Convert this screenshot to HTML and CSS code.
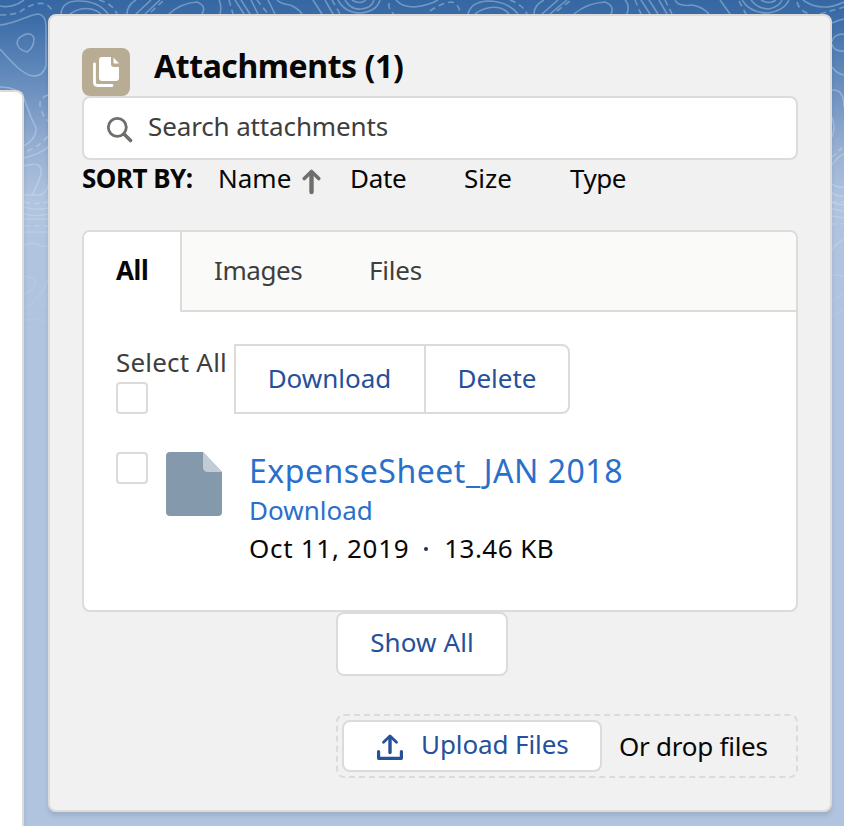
FILE: index.html
```html
<!DOCTYPE html>
<html lang="en">
<head>
<meta charset="utf-8">
<title>Attachments</title>
<link rel="stylesheet" href="styles.css">
</head>
<body>
<svg class="topography" width="844" height="400" viewBox="0 0 844 400" aria-hidden="true">
  <defs>
    <linearGradient id="fade" x1="0" y1="0" x2="0" y2="1">
      <stop offset="0" stop-color="#fff"/><stop offset=".5" stop-color="#fff"/><stop offset=".9" stop-color="#000"/>
    </linearGradient>
    <mask id="mask" maskUnits="userSpaceOnUse" x="0" y="0" width="844" height="400"><rect width="844" height="400" fill="url(#fade)"/></mask>
  </defs>
  <g mask="url(#mask)" fill="none" stroke="#d3e4f5" stroke-opacity=".38" stroke-width="1.6">
    <path d="M0 6C9 8 17 5 24 0M0 25C15 24 28 15 38 14Q46 15 46 26V65Q44 76 33 76C21 74 10 60 0 49"/>
    <path d="M22 36Q31 31 34 38Q34 48 27 52Q18 50 17 43Q18 38 22 36ZM0 87Q22 87 26 104Q30 116 36 128Q37 138 24 146M24 158Q40 154 48 147M24 166C35 163 42 163 41 174Q38 185 32 195H24M32 195H40Q47 192 48 185M24 207Q36 211 48 208M24 214Q36 217 48 214M24 219H48M24 232H48M24 245Q30 242 36 244Q42 247 48 246M24 276C36 277 36 283 35 285Q31 292 24 294M24 308Q39 301 48 280M24 320Q38 317 48 322M24 327Q40 327 48 339"/>
    <path stroke-dasharray="6 4" d="M0 15Q12 15 20 12C30 4 48 -3 53 13M48 95Q39 98 40 106Q42 115 48 121M27 151Q39 147 48 136M24 202Q36 205 48 202M24 226H48M24 315Q37 310 48 302"/>
    <path d="M61 14Q62 2 76 1Q98 0 108 14M70 14Q80 7 91 9Q98 11 101 14M127 14Q127 5 136 0M136 14L151 0M145 14L160 0M169 14Q181 3 197 2Q207 6 202 14M219 0Q222 6 220 14M235 0L244 14M241 0L250 14M251 0L258 14M268 0L275 14M277 0Q281 4 290 5Q298 8 302 14"/>
    <path stroke-dasharray="6 4" d="M99 0Q113 4 117 14M151 12L163 1M229 0L233 14M257 0L268 14M389 3Q388 10 394 14M430 11Q443 2 452 2Q460 5 460 14"/>
    <path d="M313 0L322 14M325 0L333 14M338 0Q345 13 361 13Q377 11 380 0M345 0Q351 10 361 9Q372 8 374 0M352 0Q360 5 366 0M396 0Q402 7 414 7Q430 5 438 0M468 14Q471 2 487 1Q508 1 518 14M475 14Q487 5 500 8Q506 10 509 14M534 14Q534 5 544 0M542 14L558 0M550 14L567 0M574 14Q587 3 605 2Q615 6 611 14M625 0Q630 5 627 14M641 0L650 14M649 0L658 14M659 0L667 14M675 0Q678 7 692 5Q703 7 709 14M720 0L730 14"/>
    <path stroke-dasharray="6 4" d="M332 0L340 14M510 0Q523 5 527 14M557 11L570 1M635 0L641 14M665 0L672 14M739 1L746 14M797 2Q799 11 810 14M820 14L844 7"/>
    <path d="M742 0Q750 13 768 13Q784 11 789 0M751 0Q758 9 769 9Q779 7 782 0M761 0Q769 5 776 0M803 0Q821 13 844 2M832 23Q839 20 844 19M832 42Q833 34 844 34M832 44Q834 52 844 51M832 67Q837 74 844 75M832 90Q844 89 844 107M832 117Q836 127 832 137M832 165Q838 156 844 154M832 184Q837 188 844 187M832 193Q838 197 844 196M832 203L844 205M832 209L844 211M832 216L844 218M832 250Q834 245 844 239M832 275L844 276M832 302Q836 297 844 294M832 317L844 309"/>
    <path stroke-dasharray="5 4" d="M832 157L844 146M832 202H844M832 224H844M832 322Q838 325 844 329"/>
  </g>
</svg>
<aside class="side-panel"></aside>
<main class="card">
  <header class="card-header">
    <span class="object-icon"><svg width="48" height="48" viewBox="0 0 48 48"><path fill="#fff" d="M20 9h9v7q0 3 3 3h5v11q0 3-3 3H20q-3 0-3-3V12q0-3 3-3zM31.500 9.500L37 15.500h-4.500q-1 0-1-1z"/><path fill="none" stroke="#fff" stroke-width="2.800" stroke-linecap="round" d="M12.500 16V34.500q0 3 3 3H30"/></svg></span>
    <h1>Attachments (1)</h1>
  </header>
  <div class="search">
    <svg width="28" height="28" viewBox="0 0 28 28" fill="none" stroke="#706e6b"><circle cx="11.300" cy="11.300" r="9" stroke-width="2.800"/><path d="M18 18l6.500 6.500" stroke-width="3.600" stroke-linecap="round"/></svg>
    <span class="t-search">Search attachments</span>
  </div>
  <div class="sort">
    <strong>SORT BY:</strong>
    <span class="name">Name</span>
    <svg class="arrow" width="20" height="26" viewBox="0 0 20 26" fill="none" stroke="#706e6b" stroke-linejoin="round" stroke-linecap="round"><path stroke-width="4.400" d="M9.500 23V5"/><path stroke-width="3.600" d="M2.300 9.500l7.200-7 7.200 7"/></svg>
    <span class="date">Date</span><span class="size">Size</span><span class="type">Type</span>
  </div>
  <section class="tabs">
    <nav class="tab-bar"><span class="tab active">All</span><span class="tab images">Images</span><span class="tab files">Files</span></nav>
    <div class="tab-body">
      <div class="bulk">
        <label class="select-all"><span>Select All</span><i class="checkbox"></i></label>
        <div class="button-group"><button class="download">Download</button><button class="delete">Delete</button></div>
      </div>
      <div class="file-row">
        <i class="checkbox"></i>
        <svg class="doc" width="56" height="64" viewBox="0 0 56 64"><path fill="#8599ad" d="M4 0H37L56 20V60q0 4-4 4H4q-4 0-4-4V4q0-4 4-4z"/><path fill="#c2ccd6" d="M37 0L56 20H42q-5 0-5-5z"/></svg>
        <div class="file-info">
          <a class="file-name">ExpenseSheet_JAN 2018</a>
          <a class="file-download">Download</a>
          <div class="meta"><span class="m-date">Oct 11, 2019</span><b></b><span class="m-size">13.46 KB</span></div>
        </div>
      </div>
    </div>
  </section>
  <div class="show-all-row"><button class="show-all">Show All</button></div>
  <div class="dropzone">
    <button class="upload"><svg width="28" height="28" viewBox="0 0 28 28" fill="none" stroke="#25509a" stroke-linejoin="round" stroke-linecap="round"><path stroke-width="3.200" d="M2.600 18.500v6.800h22.800v-6.800"/><path stroke-width="3.400" d="M14 19.500V4"/><path stroke-width="2.800" d="M7.500 9.200L14 3l6.500 6.200"/></svg><span>Upload Files</span></button>
    <span class="drop-text">Or drop files</span>
  </div>
</main>
</body>
</html>
```
FILE: styles.css
```css
* { box-sizing: border-box; }
body {
  margin: 0;
  height: 826px;
  overflow: hidden;
  display: flex;
  align-items: flex-start;
  font: 26px/36px "Noto Sans", sans-serif;
  color: #080707;
  background: linear-gradient(#3567a2 0, #3d6da8 20px, #5480b5 55px, #7396c3 100px, #98b0d3 150px, #b0c4df 200px);
}
.topography { position: absolute; left: 0; top: 0; }
.side-panel {
  position: relative;
  flex: none;
  width: 24px;
  height: 750px;
  margin-top: 90px;
  background: #fff;
  border: solid #dddbda;
  border-width: 2px 2px 0 0;
  border-radius: 0 8px 0 0;
  box-shadow: 0 4px 4px rgba(0,0,0,.1);
}
.card {
  position: relative;
  flex: none;
  width: 784px;
  height: 798px;
  margin: 14px 0 0 24px;
  padding: 32px;
  background: #f1f1f1;
  border: 2px solid #dddbda;
  border-radius: 8px;
  box-shadow: 0 4px 4px rgba(0,0,0,.1);
}
.card span, .card strong, .card button { white-space: nowrap; }
.card-header { display: flex; height: 48px; }
.object-icon { width: 48px; height: 48px; border-radius: 8px; background: #b8ac95; }
.object-icon svg { display: block; }
h1 { margin: -4px 0 0 24px; font-size: 32px; line-height: 44px; font-weight: 700; white-space: nowrap; letter-spacing: -.43px; }
.search {
  display: flex;
  height: 64px;
  padding: 10px 0 0 22px;
  background: #fff;
  border: 2px solid #dddbda;
  border-radius: 8px;
  color: #3e3e3c;
}
.search svg { margin: 8px 14px 0 0; }
.t-search { letter-spacing: -.13px; }
.sort { display: flex; height: 70px; }
.sort strong { width: 136px; letter-spacing: -.5px; }
.sort .name { width: 84px; }
.sort .arrow { margin: 9px 28px 0 0; }
.sort .date { width: 114px; letter-spacing: -.3px; }
.sort .size { width: 106px; }
.sort .type { letter-spacing: -.5px; }
.tabs { height: 382px; background: #fff; border: 2px solid #dddbda; border-radius: 8px; overflow: hidden; }
.tab-bar { display: flex; height: 80px; background: #fafaf9; border-bottom: 2px solid #dddbda; color: #3e3e3c; }
.tab { padding: 20px 34px 0 33px; }
.tab.active { width: 98px; height: 80px; padding-left: 32px; background: #fff; border-right: 2px solid #dddbda; font-weight: 700; color: #080707; letter-spacing: -.4px; }
.tab.images { width: 154px; padding-left: 32px; letter-spacing: -.4px; }
.tab.files { letter-spacing: -.2px; }
.tab-body { padding: 32px; }
.bulk { display: flex; height: 70px; }
.select-all { width: 118px; color: #3e3e3c; }
.select-all span { display: block; height: 38px; letter-spacing: .2px; }
.checkbox { display: block; flex: none; width: 32px; height: 32px; background: #fff; border: 2px solid #dddbda; border-radius: 4px; }
.button-group { display: flex; }
button { padding: 0; font: inherit; color: #25509a; background: #fff; border: 2px solid #dddbda; }
.download { width: 192px; height: 70px; padding: 0 1px 2px 0; }
.delete { width: 146px; height: 70px; margin-left: -2px; padding-bottom: 2px; border-radius: 0 8px 8px 0; }
.file-row { display: flex; margin-top: 38px; }
.doc { margin: 0 28px 0 18px; flex: none; }
.file-info { margin-left: -1px; }
.file-info a { display: block; color: #2a70cb; white-space: nowrap; }
.file-name { font-size: 32px; line-height: 40px; margin-top: -1px; letter-spacing: .53px; }
.file-download { line-height: 38px; }
.meta { display: flex; align-items: center; height: 38px; }
.m-date { letter-spacing: .7px; }
.m-size { letter-spacing: .45px; }
.meta b { width: 4px; height: 4px; margin: 2px 16px 0 15px; border-radius: 50%; background: #16325c; }
.show-all-row { display: flex; height: 102px; padding-left: 254px; }
.show-all { width: 172px; height: 64px; padding-bottom: 4px; border-radius: 8px; letter-spacing: .1px; }
.dropzone { display: flex; align-items: center; width: 462px; height: 64px; margin-left: 254px; padding-left: 4px; border: 2px dashed #dddbda; border-radius: 8px; }
.upload { display: flex; width: 260px; height: 52px; padding: 5px 0 0 32px; border-radius: 8px; letter-spacing: -.1px; }
.upload svg { margin: 6px 17px 0 0; }
.upload span { line-height: 34px; }
.drop-text { margin-left: 17px; letter-spacing: -.25px; }
```
